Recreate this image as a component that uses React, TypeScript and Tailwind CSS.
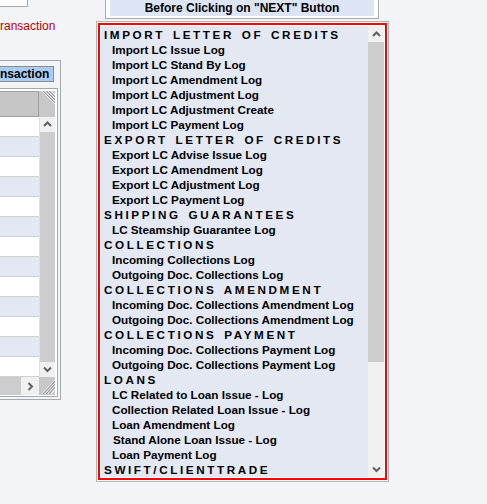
import React from 'react';

type Line = { text: string; header?: boolean; indent?: string };

const lines: Line[] = [
  { text: 'IMPORT LETTER OF CREDITS', header: true },
  { text: 'Import LC Issue Log' },
  { text: 'Import LC Stand By Log' },
  { text: 'Import LC Amendment Log' },
  { text: 'Import LC Adjustment Log' },
  { text: 'Import LC Adjustment Create' },
  { text: 'Import LC Payment Log' },
  { text: 'EXPORT LETTER OF CREDITS', header: true },
  { text: 'Export LC Advise Issue Log' },
  { text: 'Export LC Amendment Log' },
  { text: 'Export LC Adjustment Log' },
  { text: 'Export LC Payment Log' },
  { text: 'SHIPPING GUARANTEES', header: true },
  { text: 'LC Steamship Guarantee Log' },
  { text: 'COLLECTIONS', header: true },
  { text: 'Incoming Collections Log' },
  { text: 'Outgoing Doc. Collections Log' },
  { text: 'COLLECTIONS AMENDMENT', header: true },
  { text: 'Incoming Doc. Collections Amendment Log' },
  { text: 'Outgoing Doc. Collections Amendment Log' },
  { text: 'COLLECTIONS PAYMENT', header: true },
  { text: 'Incoming Doc. Collections Payment Log' },
  { text: 'Outgoing Doc. Collections Payment Log' },
  { text: 'LOANS', header: true },
  { text: 'LC Related to Loan Issue - Log' },
  { text: 'Collection Related Loan Issue - Log' },
  { text: 'Loan Amendment Log' },
  { text: 'Stand Alone Loan Issue - Log', indent: 'pl-[12px]' },
  { text: 'Loan Payment Log' },
  { text: 'SWIFT/CLIENTTRADE', header: true },
];

function Chevron({ dir }: { dir: 'up' | 'down' | 'right' }) {
  const d =
    dir === 'up' ? 'M1 5 L4.5 1.5 L8 5' : dir === 'down' ? 'M1 1.5 L4.5 5 L8 1.5' : 'M1.5 1 L5 4.5 L1.5 8';
  const w = dir === 'right' ? 7 : 9;
  const h = dir === 'right' ? 9 : 7;
  return (
    <svg width={w} height={h} viewBox={`0 0 ${w} ${h}`}>
      <path d={d} fill="none" stroke="#606060" strokeWidth="2" />
    </svg>
  );
}

function Hatch({ corner }: { corner: 'top' | 'bottom' }) {
  return (
    <svg className="block h-full w-full" preserveAspectRatio="none">
      <rect width="100%" height="100%" fill="#c8c8c8" />
      {corner === 'top' ? (
        <g>
          <line x1="3" y1="0" x2="16" y2="13" stroke="#ffffff" />
          <line x1="6" y1="0" x2="16" y2="10" stroke="#ffffff" />
          <line x1="9" y1="0" x2="16" y2="7" stroke="#ffffff" />
          <line x1="12" y1="0" x2="16" y2="4" stroke="#ffffff" />
          <line x1="4" y1="0" x2="16" y2="12" stroke="#8a8a8a" />
          <line x1="7" y1="0" x2="16" y2="9" stroke="#8a8a8a" />
          <line x1="10" y1="0" x2="16" y2="6" stroke="#8a8a8a" />
        </g>
      ) : (
        <g>
          <line x1="16" y1="3" x2="3" y2="17" stroke="#ffffff" />
          <line x1="16" y1="6" x2="6" y2="17" stroke="#ffffff" />
          <line x1="16" y1="9" x2="9" y2="17" stroke="#ffffff" />
          <line x1="16" y1="12" x2="12" y2="17" stroke="#ffffff" />
          <line x1="16" y1="4" x2="4" y2="17" stroke="#8a8a8a" />
          <line x1="16" y1="7" x2="7" y2="17" stroke="#8a8a8a" />
          <line x1="16" y1="10" x2="10" y2="17" stroke="#8a8a8a" />
        </g>
      )}
    </svg>
  );
}

export default function App() {
  return (
    <div className="w-[487px] h-[504px] bg-[#f2f4f8] flex overflow-hidden font-['Liberation_Sans',Arial,sans-serif] text-black">
      {/* Left partial panel */}
      <div className="w-[61px] shrink-0 flex flex-col">
        <div className="w-[28px] h-[7px] bg-white border-r border-b border-[#a8a8a8]" />
        <div className="mt-[12px] text-[12px] leading-[14px] text-[#c00000] whitespace-nowrap">ransaction</div>
        <div className="mt-[27px] h-[340px] border-t border-r border-b border-[#a8a8a8] flex flex-col">
          <div className="mt-[5px] w-[54px] h-[16px] bg-[#a9cdf2] border border-l-0 border-[#8c8c8c] text-[12px] leading-[15px] font-bold text-right pr-[7px] whitespace-nowrap">
            nsaction
          </div>
          <div className="mt-[6px] w-[58px] h-[309px] border-t border-r border-b border-[#a8a8a8] bg-white flex flex-col pt-[2px]">
            <div className="flex h-[26px]">
              <div className="w-[39px] bg-[#c6c6c6] border-t border-b border-r border-[#a0a0a0]" />
              <div className="w-[16px]">
                <Hatch corner="top" />
              </div>
            </div>
            <div className="flex h-[260px]">
              <div className="w-[39px] flex flex-col">
                {Array.from({ length: 13 }).map((_, i) => (
                  <div
                    key={i}
                    className={`h-[20px] border-b border-[#d0d0d0] ${i % 2 === 0 ? 'bg-white' : 'bg-[#e4e8f4]'}`}
                  />
                ))}
              </div>
              <div className="w-[16px] flex flex-col border-l border-[#e0e0e0]">
                <div className="h-[15px] bg-[#f0f0f0] flex items-center justify-center">
                  <Chevron dir="up" />
                </div>
                <div className="flex-1 bg-[#cdcdcd]" />
                <div className="h-[15px] bg-[#f0f0f0] flex items-center justify-center">
                  <Chevron dir="down" />
                </div>
              </div>
            </div>
            <div className="flex h-[18px]">
              <div className="w-[21px] bg-[#cdcdcd]" />
              <div className="w-[18px] bg-[#f0f0f0] flex items-center justify-center">
                <Chevron dir="right" />
              </div>
              <div className="w-[16px]">
                <Hatch corner="bottom" />
              </div>
            </div>
          </div>
        </div>
      </div>

      {/* Right panel */}
      <div className="ml-[35px] w-[293px] shrink-0 flex flex-col">
        <div className="ml-[9px] w-[274px] bg-white border-l border-r border-b border-[#a8a8a8] px-[4px] pb-[2px]">
          <div className="h-[16px] bg-[#dde4f4] text-[12px] leading-[16px] font-bold text-center whitespace-nowrap">
            Before Clicking on "NEXT" Button
          </div>
        </div>
        <div className="mt-[2px] h-[461px] border border-[#b4b4b4] bg-white p-px">
          <div className="h-full border-2 border-[#ff0000] bg-white p-px flex">
            <div className="flex-1 bg-[#e3e8f2] pt-px text-[11.7px] leading-[15px] font-bold whitespace-nowrap overflow-hidden">
              {lines.map((l, i) =>
                l.header ? (
                  <div key={i} className="pl-[3px] tracking-[2.6px] [word-spacing:2px]">
                    {l.text}
                  </div>
                ) : (
                  <div key={i} className={l.indent ?? 'pl-[11px]'}>
                    {l.text}
                  </div>
                )
              )}
            </div>
            <div className="w-[16px] flex flex-col">
              <div className="h-[16px] bg-[#f0f0f0] flex items-center justify-center">
                <Chevron dir="up" />
              </div>
              <div className="h-[320px] bg-[#cdcdcd]" />
              <div className="flex-1 bg-[#f0f0f0]" />
              <div className="h-[16px] bg-[#f0f0f0] flex items-center justify-center">
                <Chevron dir="down" />
              </div>
            </div>
          </div>
        </div>
      </div>
    </div>
  );
}
